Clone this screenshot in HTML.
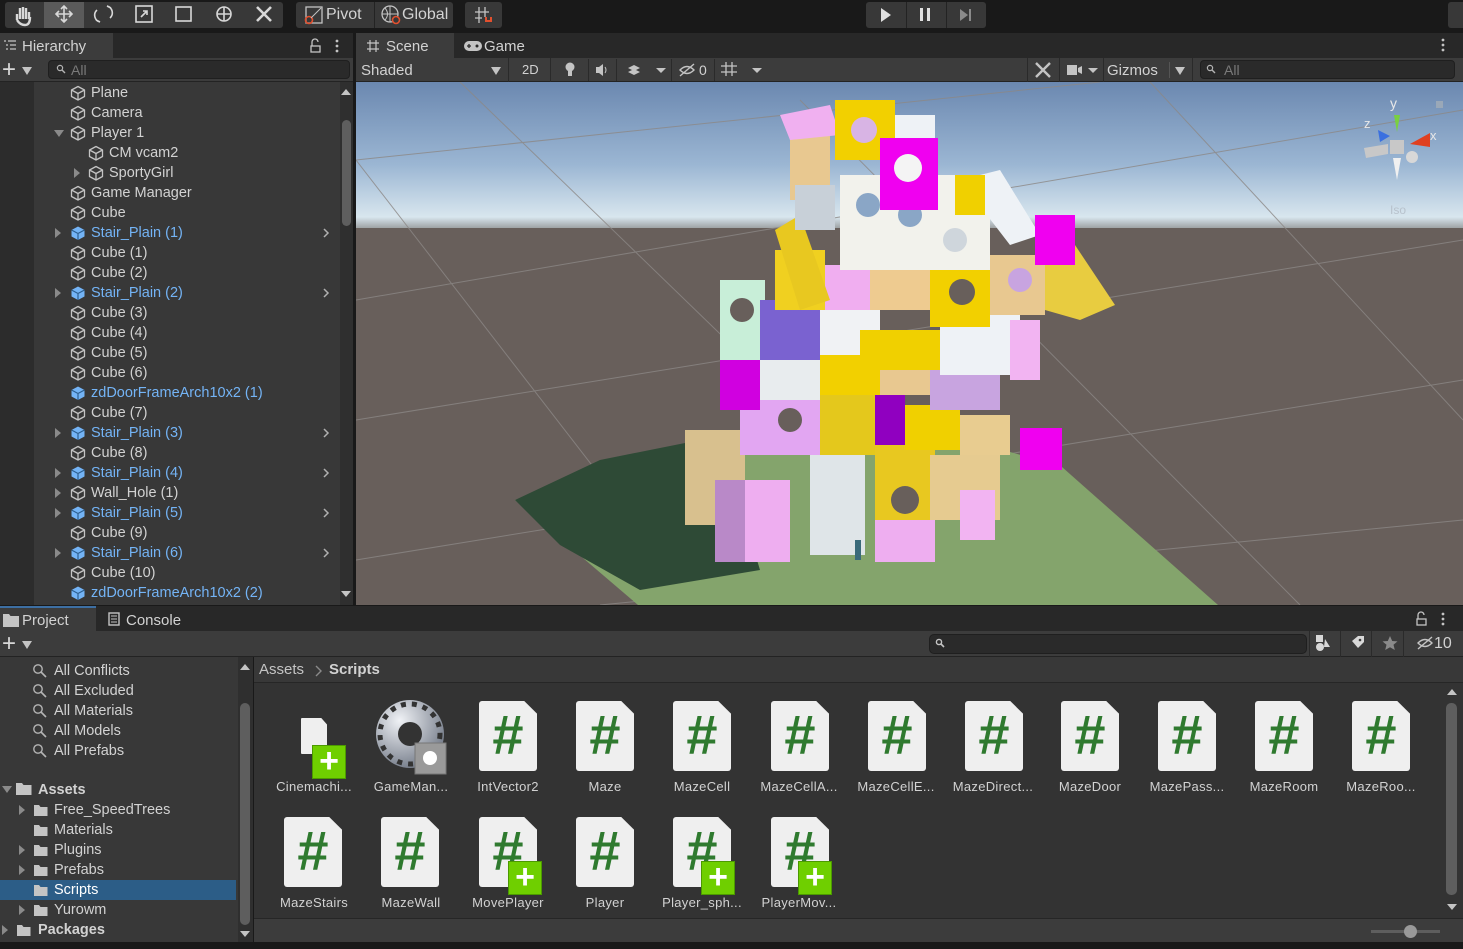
<!DOCTYPE html>
<html><head><meta charset="utf-8">
<style>
*{margin:0;padding:0;box-sizing:border-box}
body{width:1463px;height:949px;background:#191919;font-family:"Liberation Sans",sans-serif;color:#d2d2d2;font-size:14.5px;position:relative;overflow:hidden}
.a{position:absolute}
.btn{position:absolute;top:2px;height:26px;background:#383838;border-radius:3px}
.row{position:absolute;height:20px;line-height:20px;white-space:nowrap;margin-top:1px}
.blue{color:#74b4f6}
.tri{position:absolute;width:0;height:0}
.fold{border-left:5px solid transparent;border-right:5px solid transparent;border-top:8px solid #8a8a8a}
.lbl{position:absolute;font-size:13px;color:#d2d2d2;text-align:center;width:96px;letter-spacing:.3px}
.doc{position:absolute;width:58px;height:70px;background:#efefef;clip-path:polygon(0 0,78% 0,100% 18%,100% 100%,0 100%);border-radius:3px}
.doc span{position:absolute;left:0;right:0;top:4px;text-align:center;font-size:56px;font-weight:bold;color:#2f7a2f;line-height:60px}
.plus{position:absolute;width:34px;height:34px;background:#6fcf00;border:1px solid #4c9a00;color:#fff;font-size:34px;line-height:30px;text-align:center;font-weight:bold}
</style></head><body>
<svg width="0" height="0" style="position:absolute"><defs>
<g id="cube"><path d="M8 1.5 L14.5 5 L14.5 11.5 L8 15 L1.5 11.5 L1.5 5 Z M1.5 5 L8 8.5 L14.5 5 M8 8.5 L8 15" fill="none" stroke="#c4c4c4" stroke-width="1.3" stroke-linejoin="round"/></g>
<g id="bcube"><path d="M8 1.5 L14.5 5 L14.5 11.5 L8 15 L1.5 11.5 L1.5 5 Z" fill="#74b4f6"/><path d="M1.5 5 L8 8.5 L14.5 5 M8 8.5 L8 15" fill="none" stroke="#2d5f8f" stroke-width="1.2"/></g>
<g id="mag"><circle cx="6" cy="6" r="4.2" fill="none" stroke="#b4b4b4" stroke-width="1.4"/><path d="M9 9 L14 14" stroke="#b4b4b4" stroke-width="1.6"/></g>
<g id="fold"><path d="M1 3 h5 l1.5 2 h7 v9 h-13.5z" fill="#c4c4c4"/></g>
</defs></svg>

<!-- top toolbar -->
<div class="btn" style="left:5px;width:278px"></div>
<div class="a" style="left:44px;top:2px;width:40px;height:26px;background:#5a5a5a"></div>
<svg class="a" style="left:0;top:0" width="520" height="30">
<g stroke="#d8d8d8" fill="none" stroke-width="1.6">
<path d="M17 20 v-6 M20 19 v-11 M23 19 v-12 M26 19 v-11 M29 19 v-7 M17 20 q3 5 8 5 q5 0 5-8" stroke-width="2.4"/>
<path d="M64 6 v16 M56 14 h16 M61 9 l3-3 3 3 M61 19 l3 3 3-3 M59 11 l-3 3 3 3 M69 11 l3 3-3 3"/>
<path d="M97 10 a7 7 0 0 0 3 12 M110 18 a7 7 0 0 0 -3 -12 M96 20 l4 2 M111 8 l-4-2"/>
<rect x="136" y="6" width="16" height="16"/><path d="M141 17 l6-6 M143 11 h4 v4"/>
<rect x="176" y="7" width="15" height="14"/>
<circle cx="224" cy="14" r="7"/><path d="M224 7 v14 M217 14 h14"/>
<path d="M257 7 l14 14 M271 7 l-14 14" stroke-width="2.6"/>
</g>
</svg>
<div class="btn" style="left:296px;width:157px"></div>
<div class="a" style="left:374px;top:2px;width:1px;height:26px;background:#232323"></div>
<svg class="a" style="left:300px;top:4px" width="160" height="22"><rect x="6" y="3" width="16" height="16" fill="none" stroke="#c4c4c4" stroke-width="1.3"/><circle cx="9" cy="16" r="3.5" fill="none" stroke="#e2502e" stroke-width="1.6"/><path d="M11 14 l10-10" stroke="#c4c4c4"/>
<circle cx="90" cy="10" r="8" fill="none" stroke="#c4c4c4" stroke-width="1.3"/><path d="M82 10 h16 M90 2 v16 M85 4 q5 6 0 12" fill="none" stroke="#c4c4c4"/><circle cx="96" cy="16" r="3.5" fill="#383838" stroke="#e2502e" stroke-width="1.6"/></svg>
<div class="a" style="left:326px;top:6px;font-size:16px">Pivot</div>
<div class="a" style="left:402px;top:6px;font-size:16px">Global</div>
<div class="btn" style="left:465px;width:37px"></div>
<svg class="a" style="left:474px;top:5px" width="22" height="20"><path d="M5 2 v16 M11 2 v10 M1 7 h14 M1 13 h7" stroke="#c4c4c4" stroke-width="1.3"/><path d="M12 12 v4 h5 v-4" fill="none" stroke="#e2502e" stroke-width="2"/></svg>
<div class="btn" style="left:866px;width:120px"></div>
<div class="a" style="left:906px;top:2px;width:1px;height:26px;background:#232323"></div>
<div class="a" style="left:946px;top:2px;width:1px;height:26px;background:#232323"></div>
<div class="tri" style="left:881px;top:8px;border-top:7px solid transparent;border-bottom:7px solid transparent;border-left:10px solid #e0e0e0"></div>
<div class="a" style="left:920px;top:8px;width:3px;height:13px;background:#e0e0e0"></div><div class="a" style="left:927px;top:8px;width:3px;height:13px;background:#e0e0e0"></div>
<div class="tri" style="left:960px;top:9px;border-top:6px solid transparent;border-bottom:6px solid transparent;border-left:8px solid #8a8a8a"></div>
<div class="a" style="left:969px;top:9px;width:2px;height:12px;background:#8a8a8a"></div>
<div class="btn" style="left:1448px;width:20px"></div>

<!-- Hierarchy -->
<div class="a" style="left:0;top:33px;width:353px;height:25px;background:#282828"></div>
<div class="a" style="left:0;top:33px;width:113px;height:25px;background:#3c3c3c;border-top:2px solid #3c3c3c"></div>
<svg class="a" style="left:3px;top:39px" width="14" height="12"><path d="M1 2h2M5 2h8M3 6h2M7 6h6M3 10h2M7 10h6" stroke="#c4c4c4" stroke-width="1.3"/></svg>
<div class="a" style="left:22px;top:38px;font-size:15px">Hierarchy</div>
<svg class="a" style="left:308px;top:38px" width="36" height="16"><path d="M4 8 v-4 a3 3 0 0 1 6 0" fill="none" stroke="#c4c4c4" stroke-width="1.3"/><rect x="3" y="8" width="9" height="6" fill="none" stroke="#c4c4c4" stroke-width="1.3"/><circle cx="29" cy="3" r="1.4" fill="#c4c4c4"/><circle cx="29" cy="8" r="1.4" fill="#c4c4c4"/><circle cx="29" cy="13" r="1.4" fill="#c4c4c4"/></svg>
<div class="a" style="left:0;top:58px;width:353px;height:24px;background:#3c3c3c;border-bottom:1px solid #232323"></div>
<div class="a" style="left:2px;top:56px;font-size:24px;color:#d8d8d8">+</div>
<div class="tri fold" style="left:22px;top:67px;border-top-color:#c4c4c4"></div>
<div class="a" style="left:48px;top:60px;width:302px;height:19px;background:#2a2a2a;border:1px solid #1f1f1f;border-radius:4px"></div>
<svg class="a" style="left:56px;top:64px" width="12" height="12"><circle cx="4" cy="4" r="2.6" fill="none" stroke="#b4b4b4" stroke-width="1.2"/><path d="M6 6 l3 3" stroke="#b4b4b4" stroke-width="1.4"/></svg>
<div class="a" style="left:71px;top:62px;color:#7a7a7a;font-size:14px">All</div>

<div class="a" style="left:0;top:82px;width:340px;height:523px;background:#383838"></div>
<div class="a" style="left:0;top:82px;width:34px;height:523px;background:#2c2c2c"></div>
<div class="a" style="left:340px;top:82px;width:13px;height:523px;background:#2f2f2f"></div>
<div class="a" style="left:342px;top:120px;width:9px;height:106px;background:#5e5e5e;border-radius:5px"></div>
<div class="tri" style="left:341px;top:89px;border-left:5px solid transparent;border-right:5px solid transparent;border-bottom:6px solid #c4c4c4"></div>
<div class="tri" style="left:341px;top:591px;border-left:5px solid transparent;border-right:5px solid transparent;border-top:6px solid #c4c4c4"></div>

<svg class="a" style="left:0;top:83px" width="340" height="522">
<use href="#cube" x="70" y="2"/><use href="#cube" x="70" y="22"/><use href="#cube" x="70" y="42"/><use href="#cube" x="88" y="62"/><use href="#cube" x="88" y="82"/><use href="#cube" x="70" y="102"/><use href="#cube" x="70" y="122"/>
<use href="#bcube" x="70" y="142"/><use href="#cube" x="70" y="162"/><use href="#cube" x="70" y="182"/><use href="#bcube" x="70" y="202"/><use href="#cube" x="70" y="222"/><use href="#cube" x="70" y="242"/><use href="#cube" x="70" y="262"/><use href="#cube" x="70" y="282"/>
<use href="#bcube" x="70" y="302"/><use href="#cube" x="70" y="322"/><use href="#bcube" x="70" y="342"/><use href="#cube" x="70" y="362"/><use href="#bcube" x="70" y="382"/><use href="#cube" x="70" y="402"/><use href="#bcube" x="70" y="422"/><use href="#cube" x="70" y="442"/><use href="#bcube" x="70" y="462"/><use href="#cube" x="70" y="482"/><use href="#bcube" x="70" y="502"/>
<g fill="#8a8a8a"><path d="M54 47 h10 l-5 7z"/><path d="M74 85 v10 l6-5z"/>
<path d="M55 145 v10 l6-5z"/><path d="M55 205 v10 l6-5z"/><path d="M55 345 v10 l6-5z"/><path d="M55 385 v10 l6-5z"/><path d="M55 405 v10 l6-5z"/><path d="M55 425 v10 l6-5z"/><path d="M55 465 v10 l6-5z"/></g>
<g fill="none" stroke="#b0b0b0" stroke-width="1.5"><path d="M324 146 l4 4 -4 4"/><path d="M324 206 l4 4 -4 4"/><path d="M324 346 l4 4 -4 4"/><path d="M324 386 l4 4 -4 4"/><path d="M324 426 l4 4 -4 4"/><path d="M324 466 l4 4 -4 4"/></g>
</svg>
<div class="row" style="left:91px;top:82px">Plane</div>
<div class="row" style="left:91px;top:102px">Camera</div>
<div class="row" style="left:91px;top:122px">Player 1</div>
<div class="row" style="left:109px;top:142px">CM vcam2</div>
<div class="row" style="left:109px;top:162px">SportyGirl</div>
<div class="row" style="left:91px;top:182px">Game Manager</div>
<div class="row" style="left:91px;top:202px">Cube</div>
<div class="row blue" style="left:91px;top:222px">Stair_Plain (1)</div>
<div class="row" style="left:91px;top:242px">Cube (1)</div>
<div class="row" style="left:91px;top:262px">Cube (2)</div>
<div class="row blue" style="left:91px;top:282px">Stair_Plain (2)</div>
<div class="row" style="left:91px;top:302px">Cube (3)</div>
<div class="row" style="left:91px;top:322px">Cube (4)</div>
<div class="row" style="left:91px;top:342px">Cube (5)</div>
<div class="row" style="left:91px;top:362px">Cube (6)</div>
<div class="row blue" style="left:91px;top:382px">zdDoorFrameArch10x2 (1)</div>
<div class="row" style="left:91px;top:402px">Cube (7)</div>
<div class="row blue" style="left:91px;top:422px">Stair_Plain (3)</div>
<div class="row" style="left:91px;top:442px">Cube (8)</div>
<div class="row blue" style="left:91px;top:462px">Stair_Plain (4)</div>
<div class="row" style="left:91px;top:482px">Wall_Hole (1)</div>
<div class="row blue" style="left:91px;top:502px">Stair_Plain (5)</div>
<div class="row" style="left:91px;top:522px">Cube (9)</div>
<div class="row blue" style="left:91px;top:542px">Stair_Plain (6)</div>
<div class="row" style="left:91px;top:562px">Cube (10)</div>
<div class="row blue" style="left:91px;top:582px">zdDoorFrameArch10x2 (2)</div>

<!-- Scene header -->
<div class="a" style="left:356px;top:33px;width:1107px;height:25px;background:#282828"></div>
<div class="a" style="left:356px;top:33px;width:98px;height:25px;background:#3c3c3c"></div>
<svg class="a" style="left:366px;top:39px" width="14" height="14"><path d="M4 1v12M10 1v12M1 4h12M1 10h12" stroke="#c4c4c4" stroke-width="1.2"/></svg>
<div class="a" style="left:386px;top:38px;font-size:15px">Scene</div>
<svg class="a" style="left:463px;top:40px" width="20" height="12"><rect x="1" y="1" width="18" height="10" rx="5" fill="#c4c4c4"/><path d="M4 6h4M6 4v4" stroke="#282828" stroke-width="1.3"/><circle cx="14" cy="6" r="1.5" fill="#282828"/></svg>
<div class="a" style="left:484px;top:38px;font-size:15px">Game</div>
<svg class="a" style="left:1438px;top:37px" width="10" height="16"><circle cx="5" cy="3" r="1.4" fill="#c4c4c4"/><circle cx="5" cy="8" r="1.4" fill="#c4c4c4"/><circle cx="5" cy="13" r="1.4" fill="#c4c4c4"/></svg>
<div class="a" style="left:356px;top:58px;width:1107px;height:24px;background:#3c3c3c;border-bottom:1px solid #232323"></div>
<div class="a" style="left:361px;top:62px;font-size:15px">Shaded</div>
<div class="tri fold" style="left:491px;top:67px;border-top-color:#c4c4c4"></div>
<div class="a" style="left:508px;top:58px;width:1px;height:24px;background:#2a2a2a"></div>
<div class="a" style="left:522px;top:62px;font-size:13px">2D</div>
<div class="a" style="left:550px;top:58px;width:1px;height:24px;background:#2a2a2a"></div>
<svg class="a" style="left:556px;top:59px" width="220" height="22">
<g fill="#c4c4c4"><circle cx="14" cy="8" r="4.5"/><rect x="12" y="12" width="4" height="5"/>
<path d="M40 8h3l4-3v12l-4-3h-3z"/><path d="M49 8 q2 3 0 6" fill="none" stroke="#c4c4c4"/>
<path d="M72 13 l6-3 6 3 -6 3z M72 9 l6-3 6 3 -6 3z"/>
<path d="M100 9 l5 5 5-5z"/>
<path d="M124 11 q7-7 14 0 q-7 7-14 0z" fill="none" stroke="#c4c4c4" stroke-width="1.4"/><path d="M124 17 l14-12" stroke="#c4c4c4" stroke-width="1.4"/>
<path d="M170 3v14M176 3v14M165 7h16M165 13h16" stroke="#c4c4c4" stroke-width="1.3"/>
<path d="M196 9 l5 5 5-5z"/></g>
<g fill="#2a2a2a"><rect x="32" y="0" width="1" height="22"/><rect x="60" y="0" width="1" height="22"/><rect x="115" y="0" width="1" height="22"/><rect x="158" y="0" width="1" height="22"/></g>
</svg>
<div class="a" style="left:699px;top:62px;font-size:14px">0</div>
<div class="a" style="left:1027px;top:58px;width:1px;height:24px;background:#2a2a2a"></div>
<svg class="a" style="left:1033px;top:61px" width="20" height="18"><path d="M3 2l14 14M17 2L3 16" stroke="#c4c4c4" stroke-width="2.4"/></svg>
<div class="a" style="left:1059px;top:58px;width:1px;height:24px;background:#2a2a2a"></div>
<svg class="a" style="left:1066px;top:62px" width="34" height="16"><rect x="1" y="3" width="10" height="10" fill="#c4c4c4"/><path d="M12 6l4-2v8l-4-2z" fill="#c4c4c4"/><path d="M22 6 l5 5 5-5z" fill="#c4c4c4"/></svg>
<div class="a" style="left:1103px;top:58px;width:1px;height:24px;background:#2a2a2a"></div>
<div class="a" style="left:1107px;top:62px;font-size:15px">Gizmos</div>
<div class="a" style="left:1169px;top:62px;width:1px;height:16px;background:#555"></div>
<div class="tri fold" style="left:1175px;top:67px;border-top-color:#c4c4c4"></div>
<div class="a" style="left:1192px;top:58px;width:1px;height:24px;background:#2a2a2a"></div>
<div class="a" style="left:1200px;top:60px;width:255px;height:19px;background:#2a2a2a;border:1px solid #1f1f1f;border-radius:4px"></div>
<svg class="a" style="left:1206px;top:64px" width="12" height="12"><circle cx="4" cy="4" r="2.6" fill="none" stroke="#b4b4b4" stroke-width="1.2"/><path d="M6 6 l3 3" stroke="#b4b4b4" stroke-width="1.4"/></svg>
<div class="a" style="left:1224px;top:62px;color:#7a7a7a;font-size:14px">All</div>

<!-- Scene view -->
<svg class="a" style="left:356px;top:82px" width="1107" height="523" viewBox="356 82 1107 523">
<defs><linearGradient id="sky" x1="0" y1="0" x2="0" y2="1">
<stop offset="0" stop-color="#6b88b0"/><stop offset=".55" stop-color="#9bb6d3"/><stop offset=".9" stop-color="#d8e6ee"/><stop offset="1" stop-color="#8a8a8a"/></linearGradient></defs>
<rect x="356" y="82" width="1107" height="150" fill="url(#sky)"/>
<rect x="356" y="228" width="1107" height="380" fill="#685f5b"/>
<g stroke="#8c8886" stroke-width="1" fill="none" opacity=".8">
<path d="M356 160 L1100 82 M356 300 L1463 110 M356 420 L1463 240 M356 560 L1463 380 M600 605 L1463 520"/>
<path d="M356 160 L700 605 M460 82 L1000 605 M800 100 L1300 605 M1150 82 L1463 420"/>
</g>
<polygon points="515,500 638,605 1218,605 1062,467 900,420 700,440" fill="#84a46c"/>
<polygon points="515,500 560,545 640,590 760,570 730,470 700,440 600,460" fill="#2e4a36"/>
<g>
<rect x="685" y="430" width="60" height="95" fill="#d8c08e"/>
<rect x="715" y="480" width="75" height="82" fill="#eeaef0"/>
<rect x="715" y="480" width="30" height="82" fill="#b989c8"/>
<rect x="810" y="455" width="55" height="100" fill="#dfe5e8"/>
<rect x="875" y="440" width="60" height="95" fill="#e8c820"/>
<circle cx="905" cy="500" r="14" fill="#685f5b"/>
<rect x="875" y="520" width="60" height="42" fill="#eeaef0"/>
<rect x="930" y="455" width="70" height="65" fill="#e6cb90"/>
<rect x="960" y="490" width="35" height="50" fill="#f2b4f2"/>
<rect x="1020" y="428" width="42" height="42" fill="#f000f0"/>
<rect x="740" y="395" width="80" height="60" fill="#e2a6f2"/>
<circle cx="790" cy="420" r="12" fill="#685f5b"/>
<rect x="820" y="395" width="55" height="60" fill="#e4c81c"/>
<rect x="875" y="390" width="30" height="55" fill="#9000c0"/>
<rect x="905" y="405" width="55" height="45" fill="#f0d000"/>
<rect x="960" y="415" width="50" height="40" fill="#e8cc90"/>
<rect x="720" y="360" width="40" height="50" fill="#d000e0"/>
<rect x="760" y="350" width="60" height="50" fill="#e8ecee"/>
<rect x="820" y="345" width="60" height="50" fill="#f2d000"/>
<rect x="880" y="345" width="55" height="50" fill="#e8c890"/>
<rect x="930" y="350" width="70" height="60" fill="#c8a4e0"/>
<rect x="720" y="280" width="45" height="80" fill="#c8eed8"/>
<circle cx="742" cy="310" r="12" fill="#685f5b"/>
<rect x="760" y="300" width="60" height="60" fill="#7a62d0"/>
<rect x="820" y="310" width="60" height="45" fill="#f0f2f4"/>
<rect x="860" y="330" width="100" height="40" fill="#f0d000"/>
<rect x="940" y="315" width="80" height="60" fill="#eef2f6"/>
<rect x="1010" y="320" width="30" height="60" fill="#f2b4f2"/>
<rect x="775" y="250" width="50" height="60" fill="#f0d020"/>
<rect x="825" y="265" width="55" height="45" fill="#f0aef0"/>
<rect x="870" y="270" width="60" height="40" fill="#eecb90"/>
<rect x="930" y="262" width="60" height="65" fill="#f2d000"/>
<circle cx="962" cy="292" r="13" fill="#685f5b"/>
<rect x="990" y="255" width="55" height="60" fill="#e8c890"/>
<circle cx="1020" cy="280" r="12" fill="#c8a4e0"/>
<polygon points="1045,255 1075,245 1115,305 1080,320 1045,310" fill="#e8cc40"/>
<rect x="840" y="175" width="150" height="95" fill="#f2f2ec"/>
<circle cx="868" cy="205" r="12" fill="#8aa6c6"/><circle cx="910" cy="215" r="12" fill="#8aa6c6"/><circle cx="955" cy="240" r="12" fill="#cfd6dc"/>
<polygon points="775,230 800,215 830,300 800,310" fill="#e8c820"/>
<polygon points="960,180 1000,170 1040,235 1010,245" fill="#eef2f6"/>
<rect x="1035" y="215" width="40" height="50" fill="#f000f0"/>
<rect x="955" y="175" width="30" height="40" fill="#f0d000"/>
<rect x="790" y="130" width="40" height="70" fill="#e8c890"/>
<polygon points="780,115 830,105 840,135 790,140" fill="#f0b0f0"/>
<rect x="835" y="100" width="60" height="60" fill="#f2d000"/>
<circle cx="864" cy="130" r="13" fill="#d8b4e4"/>
<rect x="895" y="115" width="40" height="35" fill="#eef2f6"/>
<rect x="880" y="138" width="58" height="72" fill="#f000f0"/>
<circle cx="908" cy="168" r="14" fill="#f4f4f4"/>
<rect x="795" y="185" width="40" height="45" fill="#c8d0d8"/>
<rect x="855" y="540" width="6" height="20" fill="#3a6a7a"/>
</g>
<g>
<text x="1390" y="108" fill="#e8e8e8" font-size="14" font-family="Liberation Sans">y</text>
<text x="1364" y="128" fill="#e8e8e8" font-size="13" font-family="Liberation Sans">z</text>
<text x="1430" y="140" fill="#e8e8e8" font-size="13" font-family="Liberation Sans">x</text>
<polygon points="1394,115 1400,115 1397,132" fill="#7ad040"/>
<polygon points="1378,130 1390,136 1380,142" fill="#3a70e0"/>
<polygon points="1430,133 1410,144 1430,147" fill="#e04020"/>
<rect x="1390" y="140" width="14" height="14" fill="#c8c8c8"/>
<polygon points="1364,148 1388,144 1388,154 1366,158" fill="#c8c8c8"/>
<polygon points="1393,158 1401,158 1397,180" fill="#f0f0f0"/>
<circle cx="1412" cy="157" r="6" fill="#d8d8d8"/>
<rect x="1436" y="101" width="7" height="7" fill="#9aa8b8"/>
<text x="1390" y="214" fill="#b8c2cc" font-size="12" font-family="Liberation Sans">Iso</text>
</g>
</svg>
<div class="a" style="left:353px;top:33px;width:3px;height:573px;background:#191919"></div>

<!-- Bottom panel -->
<div class="a" style="left:0;top:606px;width:1463px;height:25px;background:#282828"></div>
<div class="a" style="left:0;top:606px;width:96px;height:25px;background:#3c3c3c;border-top:2px solid #3d6fa3"></div>
<svg class="a" style="left:3px;top:613px" width="16" height="14"><path d="M0 1h6l1.5 2H16v11H0z" fill="#c4c4c4"/></svg>
<div class="a" style="left:22px;top:612px;font-size:15px">Project</div>
<svg class="a" style="left:108px;top:612px" width="12" height="14"><rect x="1" y="1" width="10" height="12" fill="none" stroke="#c4c4c4" stroke-width="1.4"/><path d="M3 4h6M3 7h6M3 10h6" stroke="#c4c4c4"/></svg>
<div class="a" style="left:126px;top:612px;font-size:15px">Console</div>
<svg class="a" style="left:1414px;top:611px" width="36" height="16"><path d="M4 8 v-4 a3 3 0 0 1 6 0" fill="none" stroke="#c4c4c4" stroke-width="1.3"/><rect x="3" y="8" width="9" height="6" fill="none" stroke="#c4c4c4" stroke-width="1.3"/><circle cx="29" cy="3" r="1.4" fill="#c4c4c4"/><circle cx="29" cy="8" r="1.4" fill="#c4c4c4"/><circle cx="29" cy="13" r="1.4" fill="#c4c4c4"/></svg>
<div class="a" style="left:0;top:631px;width:1463px;height:26px;background:#3c3c3c;border-bottom:1px solid #232323"></div>
<div class="a" style="left:2px;top:630px;font-size:24px;color:#d8d8d8">+</div>
<div class="tri fold" style="left:22px;top:641px;border-top-color:#c4c4c4"></div>
<div class="a" style="left:929px;top:634px;width:378px;height:20px;background:#2a2a2a;border:1px solid #1f1f1f;border-radius:5px"></div>
<svg class="a" style="left:935px;top:638px" width="12" height="12"><circle cx="4" cy="4" r="2.6" fill="none" stroke="#c4c4c4" stroke-width="1.4"/><path d="M6 6 l3 3" stroke="#c4c4c4" stroke-width="1.6"/></svg>
<div class="a" style="left:1309px;top:631px;width:1px;height:26px;background:#2a2a2a"></div>
<div class="a" style="left:1340px;top:631px;width:1px;height:26px;background:#2a2a2a"></div>
<div class="a" style="left:1371px;top:631px;width:1px;height:26px;background:#2a2a2a"></div>
<div class="a" style="left:1403px;top:631px;width:1px;height:26px;background:#2a2a2a"></div>
<svg class="a" style="left:1314px;top:634px" width="140" height="20"><rect x="2" y="1" width="7" height="7" fill="#d8d8d8"/><circle cx="6" cy="13" r="4" fill="#d8d8d8"/><path d="M11 5l5 8h-6z" fill="#d8d8d8"/>
<path d="M38 7 l6-5 6 0 0 6 -6 6z" fill="#d8d8d8"/><circle cx="46" cy="6" r="1.3" fill="#3c3c3c"/>
<path d="M76 2l2.2 5 5.3.4-4 3.4 1.3 5.2-4.8-2.8-4.8 2.8 1.3-5.2-4-3.4 5.3-.4z" fill="#8a8a8a"/>
<path d="M104 9 q7-7 14 0 q-7 7-14 0z" fill="none" stroke="#c4c4c4" stroke-width="1.4"/><path d="M104 15 l14-12" stroke="#c4c4c4" stroke-width="1.4"/></svg>
<div class="a" style="left:1434px;top:635px;font-size:16px">10</div>

<!-- project left -->
<div class="a" style="left:0;top:657px;width:238px;height:285px;background:#383838"></div>
<div class="a" style="left:238px;top:657px;width:15px;height:285px;background:#2f2f2f"></div>
<div class="a" style="left:240px;top:703px;width:10px;height:222px;background:#5e5e5e;border-radius:5px"></div>
<div class="tri" style="left:240px;top:664px;border-left:5px solid transparent;border-right:5px solid transparent;border-bottom:6px solid #c4c4c4"></div>
<div class="tri" style="left:240px;top:931px;border-left:5px solid transparent;border-right:5px solid transparent;border-top:6px solid #c4c4c4"></div>
<div class="a" style="left:0;top:880px;width:236px;height:20px;background:#2c5d87"></div>
<svg class="a" style="left:0;top:658px" width="238" height="284">
<use href="#mag" x="32" y="5"/><use href="#mag" x="32" y="25"/><use href="#mag" x="32" y="45"/><use href="#mag" x="32" y="65"/><use href="#mag" x="32" y="85"/>
<path d="M2 128h10l-5 7z" fill="#8a8a8a"/><path d="M16 125h6l1.5 2h8v10h-15.5z" fill="#c4c4c4"/>
<g fill="#8a8a8a"><path d="M19 147v10l6-5z"/><path d="M19 187v10l6-5z"/><path d="M19 207v10l6-5z"/><path d="M19 247v10l6-5z"/><path d="M2 267v10l6-5z"/></g>
<use href="#fold" x="33" y="144"/><use href="#fold" x="33" y="164"/><use href="#fold" x="33" y="184"/><use href="#fold" x="33" y="204"/><use href="#fold" x="33" y="224"/><use href="#fold" x="33" y="244"/><use href="#fold" x="16" y="264"/>
</svg>
<div class="row" style="left:54px;top:660px">All Conflicts</div>
<div class="row" style="left:54px;top:680px">All Excluded</div>
<div class="row" style="left:54px;top:700px">All Materials</div>
<div class="row" style="left:54px;top:720px">All Models</div>
<div class="row" style="left:54px;top:740px">All Prefabs</div>
<div class="row" style="left:38px;top:779px;font-weight:bold">Assets</div>
<div class="row" style="left:54px;top:799px">Free_SpeedTrees</div>
<div class="row" style="left:54px;top:819px">Materials</div>
<div class="row" style="left:54px;top:839px">Plugins</div>
<div class="row" style="left:54px;top:859px">Prefabs</div>
<div class="row" style="left:54px;top:879px;color:#fff">Scripts</div>
<div class="row" style="left:54px;top:899px">Yurowm</div>
<div class="row" style="left:38px;top:919px;font-weight:bold">Packages</div>

<!-- project right -->
<div class="a" style="left:254px;top:657px;width:1209px;height:26px;background:#383838;border-bottom:1px solid #262626"></div>
<div class="a" style="left:259px;top:661px;font-size:15px;color:#c4c4c4">Assets</div>
<svg class="a" style="left:314px;top:665px" width="10" height="12"><path d="M2 1l5 5-5 5" fill="none" stroke="#8a8a8a" stroke-width="1.4"/></svg>
<div class="a" style="left:329px;top:661px;font-size:15px;font-weight:bold">Scripts</div>
<div class="a" style="left:254px;top:683px;width:1209px;height:235px;background:#333333"></div>
<div class="a" style="left:1446px;top:703px;width:11px;height:192px;background:#5e5e5e;border-radius:5px"></div>
<div class="tri" style="left:1447px;top:689px;border-left:5px solid transparent;border-right:5px solid transparent;border-bottom:6px solid #c4c4c4"></div>
<div class="tri" style="left:1447px;top:904px;border-left:5px solid transparent;border-right:5px solid transparent;border-top:6px solid #c4c4c4"></div>
<div class="a" style="left:254px;top:918px;width:1209px;height:24px;background:#3c3c3c;border-top:1px solid #262626"></div>
<div class="a" style="left:1371px;top:930px;width:69px;height:3px;background:#5e5e5e"></div>
<div class="a" style="left:1404px;top:925px;width:13px;height:13px;background:#999;border-radius:50%"></div>
<div class="a" style="left:0;top:942px;width:1463px;height:7px;background:#191919"></div>

<!-- grid row1 -->
<div class="doc" style="left:301px;top:718px;width:26px;height:36px;border-radius:1px"></div>
<div class="plus" style="left:312px;top:745px">+</div>
<svg class="a" style="left:376px;top:700px" width="72" height="80"><defs><radialGradient id="g1" cx=".35" cy=".3" r=".8"><stop offset="0" stop-color="#f0f2f6"/><stop offset="1" stop-color="#6a7280"/></radialGradient></defs>
<circle cx="34" cy="34" r="34" fill="url(#g1)"/><circle cx="34" cy="34" r="30" fill="none" stroke="#333" stroke-width="5" stroke-dasharray="5 6"/><circle cx="34" cy="34" r="12" fill="#333"/><rect x="39" y="43" width="31" height="31" fill="#9a9a9a" stroke="#777"/><circle cx="54" cy="58" r="7" fill="#fff"/></svg>
<div class="doc" style="left:479px;top:701px"><span>#</span></div>
<div class="doc" style="left:576px;top:701px"><span>#</span></div>
<div class="doc" style="left:673px;top:701px"><span>#</span></div>
<div class="doc" style="left:771px;top:701px"><span>#</span></div>
<div class="doc" style="left:868px;top:701px"><span>#</span></div>
<div class="doc" style="left:965px;top:701px"><span>#</span></div>
<div class="doc" style="left:1061px;top:701px"><span>#</span></div>
<div class="doc" style="left:1158px;top:701px"><span>#</span></div>
<div class="doc" style="left:1255px;top:701px"><span>#</span></div>
<div class="doc" style="left:1352px;top:701px"><span>#</span></div>
<div class="lbl" style="left:266px;top:779px">Cinemachi...</div>
<div class="lbl" style="left:363px;top:779px">GameMan...</div>
<div class="lbl" style="left:460px;top:779px">IntVector2</div>
<div class="lbl" style="left:557px;top:779px">Maze</div>
<div class="lbl" style="left:654px;top:779px">MazeCell</div>
<div class="lbl" style="left:751px;top:779px">MazeCellA...</div>
<div class="lbl" style="left:848px;top:779px">MazeCellE...</div>
<div class="lbl" style="left:945px;top:779px">MazeDirect...</div>
<div class="lbl" style="left:1042px;top:779px">MazeDoor</div>
<div class="lbl" style="left:1139px;top:779px">MazePass...</div>
<div class="lbl" style="left:1236px;top:779px">MazeRoom</div>
<div class="lbl" style="left:1333px;top:779px">MazeRoo...</div>
<!-- grid row2 -->
<div class="doc" style="left:284px;top:817px"><span>#</span></div>
<div class="doc" style="left:381px;top:817px"><span>#</span></div>
<div class="doc" style="left:479px;top:817px"><span>#</span></div><div class="plus" style="left:508px;top:861px">+</div>
<div class="doc" style="left:576px;top:817px"><span>#</span></div>
<div class="doc" style="left:673px;top:817px"><span>#</span></div><div class="plus" style="left:701px;top:861px">+</div>
<div class="doc" style="left:771px;top:817px"><span>#</span></div><div class="plus" style="left:798px;top:861px">+</div>
<div class="lbl" style="left:266px;top:895px">MazeStairs</div>
<div class="lbl" style="left:363px;top:895px">MazeWall</div>
<div class="lbl" style="left:460px;top:895px">MovePlayer</div>
<div class="lbl" style="left:557px;top:895px">Player</div>
<div class="lbl" style="left:654px;top:895px">Player_sph...</div>
<div class="lbl" style="left:751px;top:895px">PlayerMov...</div>
</body></html>
